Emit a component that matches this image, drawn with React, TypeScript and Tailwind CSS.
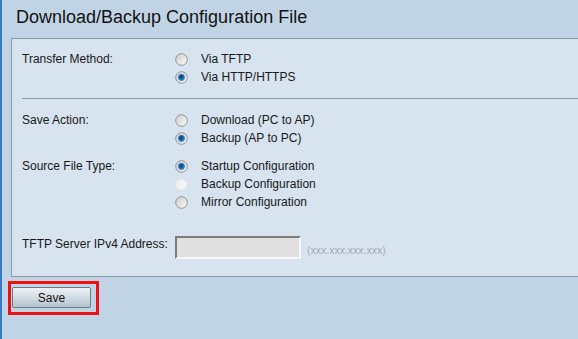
import React from "react";

type RadioState = "off" | "on" | "disabled";

function Radio({ state }: { state: RadioState }) {
  const ring = state === "disabled" ? "#dde2e6" : "#939393";
  return (
    <svg width="13" height="13" viewBox="0 0 13 13" className="shrink-0">
      <defs>
        <linearGradient id={`rg-${state}`} x1="0" y1="0" x2="1" y2="1">
          <stop offset="0" stopColor={state === "disabled" ? "#eceff1" : "#cbcbcb"} />
          <stop offset="1" stopColor={state === "disabled" ? "#f5f6f7" : "#fbfbfb"} />
        </linearGradient>
        <radialGradient id="dot" cx="0.45" cy="0.4" r="0.6">
          <stop offset="0" stopColor="#0a3a66" />
          <stop offset="0.45" stopColor="#1464a6" />
          <stop offset="1" stopColor="#3a98d6" />
        </radialGradient>
      </defs>
      <circle cx="6.5" cy="6.5" r="5.8" fill={`url(#rg-${state})`} stroke={ring} strokeWidth="1" />
      {state === "on" && <circle cx="6.5" cy="6.5" r="3.4" fill="url(#dot)" />}
    </svg>
  );
}

function Option({ state, label }: { state: RadioState; label: string }) {
  return (
    <div className="flex items-center h-[18px] gap-[13px]">
      <Radio state={state} />
      <span>{label}</span>
    </div>
  );
}

function Field({ label, options }: { label: string; options: { state: RadioState; label: string }[] }) {
  return (
    <div className="flex">
      <div className="w-[153px] leading-[18px]">{label}</div>
      <div className="flex flex-col">
        {options.map((o) => (
          <Option key={o.label} state={o.state} label={o.label} />
        ))}
      </div>
    </div>
  );
}

export default function App() {
  return (
    <div className="w-[578px] h-[339px] overflow-hidden bg-[#c1d4e6] border-l-2 border-[#3a7cc2] font-['Liberation_Sans',Arial,sans-serif] text-[12px] text-[#181818] leading-[18px]">
      <h1 className="pt-[5px] pl-[14px] text-[18px] leading-[24px] text-[#121212]">
        Download/Backup Configuration File
      </h1>

      <div className="mt-[9px] ml-[9px] bg-[#d7e3ef] border-t border-l border-b border-[#8a9ba8] pl-[10px] pt-[11px] pb-[17px]">
        <Field
          label="Transfer Method:"
          options={[
            { state: "off", label: "Via TFTP" },
            { state: "on", label: "Via HTTP/HTTPS" },
          ]}
        />

        <div className="mt-[12px] h-px bg-[#8a9ba8]" />

        <div className="mt-[12px]">
          <Field
            label="Save Action:"
            options={[
              { state: "off", label: "Download (PC to AP)" },
              { state: "on", label: "Backup (AP to PC)" },
            ]}
          />
        </div>

        <div className="mt-[10px]">
          <Field
            label="Source File Type:"
            options={[
              { state: "on", label: "Startup Configuration" },
              { state: "disabled", label: "Backup Configuration" },
              { state: "off", label: "Mirror Configuration" },
            ]}
          />
        </div>

        <div className="mt-[24px] flex items-start">
          <div className="w-[153px]">TFTP Server IPv4 Address:</div>
          <div className="mt-[1px] w-[126px] h-[23px] bg-[#e0e0e0] border-2 border-t-[#7c7c7c] border-l-[#7c7c7c] border-b-[#f6f7f8] border-r-[#f6f7f8]" />
          <span className="ml-[6px] mt-[6px] text-[10.5px] text-[#a6a9b6]">(xxx.xxx.xxx.xxx)</span>
        </div>
      </div>

      <div className="mt-[4px] ml-[6px] w-[91px] h-[34px] border-[3px] border-[#ee1111] pl-px pt-[3px]">
        <button className="w-[79px] h-[21px] border border-[#6d7a82] rounded-[2px] bg-gradient-to-b from-[#eef2f5] to-[#b4c4cf] text-[12px] text-[#141414] leading-[18px]">
          Save
        </button>
      </div>
    </div>
  );
}
